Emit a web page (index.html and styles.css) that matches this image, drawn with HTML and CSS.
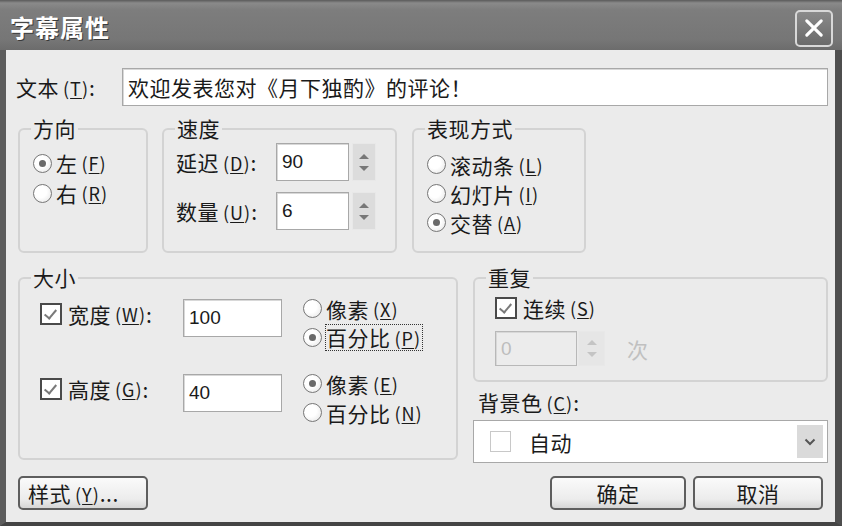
FILE: index.html
```html
<!DOCTYPE html>
<html lang="zh-CN">
<head>
<meta charset="utf-8">
<title>字幕属性</title>
<link rel="stylesheet" href="styles.css">
</head>
<body>
<div class="window">
  <div class="titlebar">
    <span class="title">字幕属性</span>
    <span class="close"><svg viewBox="0 0 20 20" width="24" height="24"><path d="M4 4 L16 16 M16 4 L4 16" stroke="#fff" stroke-width="2.6" stroke-linecap="round"/></svg></span>
  </div>
  <div class="content">
    <div class="row-text">
      <span class="lbl-text">文本<span class="acc">(<u>T</u>)</span>:</span>
      <div class="input wide">欢迎发表您对《月下独酌》的评论！</div>
    </div>

    <div class="row-groups">
      <div class="group g-dir">
        <span class="legend">方向</span>
        <div class="radio-row"><span class="radio on"></span>左<span class="acc">(<u>F</u>)</span></div>
        <div class="radio-row"><span class="radio"></span>右<span class="acc">(<u>R</u>)</span></div>
      </div>
      <div class="group g-speed">
        <span class="legend">速度</span>
        <div class="spin-row">
          <span class="spin-lbl">延迟<span class="acc">(<u>D</u>)</span>:</span>
          <div class="input num">90</div>
          <span class="spinner"><i class="up"></i><i class="down"></i></span>
        </div>
        <div class="spin-row">
          <span class="spin-lbl">数量<span class="acc">(<u>U</u>)</span>:</span>
          <div class="input num">6</div>
          <span class="spinner"><i class="up"></i><i class="down"></i></span>
        </div>
      </div>
      <div class="group g-mode">
        <span class="legend">表现方式</span>
        <div class="radio-row"><span class="radio"></span>滚动条<span class="acc">(<u>L</u>)</span></div>
        <div class="radio-row"><span class="radio"></span>幻灯片<span class="acc">(<u>I</u>)</span></div>
        <div class="radio-row"><span class="radio on"></span>交替<span class="acc">(<u>A</u>)</span></div>
      </div>
    </div>

    <div class="row-main">
      <div class="group g-size">
        <span class="legend">大小</span>
        <div class="size-row">
          <span class="chk-lbl"><span class="check"></span>宽度<span class="acc">(<u>W</u>)</span>:</span>
          <div class="input size">100</div>
          <div class="radio-col">
            <div class="radio-row"><span class="radio"></span>像素<span class="acc">(<u>X</u>)</span></div>
            <div class="radio-row"><span class="radio on"></span><span class="focus">百分比<span class="acc">(<u>P</u>)</span></span></div>
          </div>
        </div>
        <div class="size-row second">
          <span class="chk-lbl"><span class="check"></span>高度<span class="acc">(<u>G</u>)</span>:</span>
          <div class="input size">40</div>
          <div class="radio-col">
            <div class="radio-row"><span class="radio on"></span>像素<span class="acc">(<u>E</u>)</span></div>
            <div class="radio-row"><span class="radio"></span>百分比<span class="acc">(<u>N</u>)</span></div>
          </div>
        </div>
      </div>
      <div class="right-col">
        <div class="group g-repeat">
          <span class="legend">重复</span>
          <div class="chk-row"><span class="check"></span>连续<span class="acc">(<u>S</u>)</span></div>
          <div class="repeat-row">
            <div class="input num disabled">0</div>
            <span class="spinner disabled"><i class="up"></i><i class="down"></i></span>
            <span class="times">次</span>
          </div>
        </div>
        <div class="bg-lbl">背景色<span class="acc">(<u>C</u>)</span>:</div>
        <div class="select">
          <span class="swatch"></span>
          <span class="sel-text">自动</span>
          <span class="drop"><svg viewBox="0 0 12 8" width="12" height="8"><path d="M1.5 1.5 L6 6 L10.5 1.5" fill="none" stroke="#555" stroke-width="2"/></svg></span>
        </div>
      </div>
    </div>

    <div class="row-buttons">
      <button class="btn btn-style">样式<span class="acc">(<u>Y</u>)</span>...</button>
      <div class="btn-right">
        <button class="btn btn-ok">确定</button>
        <button class="btn btn-cancel">取消</button>
      </div>
    </div>
  </div>
</div>
</body>
</html>
```

FILE: styles.css
```css
* { box-sizing: border-box; }
html, body { margin: 0; padding: 0; }
body {
  width: 842px;
  height: 526px;
  overflow: hidden;
  background: #4a4a4a;
  font-family: "Noto Sans CJK SC", "Noto Sans", sans-serif;
  color: #1a1a1a;
}
.window {
  width: 842px;
  height: 526px;
  display: flex;
  flex-direction: column;
  background: #575757;
  border-left: 6px solid #5c5c5c;
  border-right: 7px solid #4e4e4e;
  border-bottom: 4px solid #444;
}
.titlebar {
  height: 50px;
  margin-left: -6px;
  margin-right: -7px;
  padding: 0 9px 0 10px;
  display: flex;
  align-items: center;
  justify-content: space-between;
  background: linear-gradient(#5a5a5a 0, #8a8a8a 3px, #7d7d7d 10px, #767676 40px, #6c6c6c 50px);
}
.title {
  color: #fff;
  font-size: 24px;
  font-weight: bold;
  letter-spacing: 1px;
  text-shadow: 1px 1px 0 #3a3a3a;
  margin-top: 2px;
}
.close {
  width: 38px;
  height: 37px;
  margin-top: 6px;
  border: 2px solid #d8d8d8;
  border-radius: 5px;
  background: linear-gradient(#8a8a8a, #6a6a6a);
  display: flex;
  align-items: center;
  justify-content: center;
}
.content {
  flex: 1;
  background: #ebebeb;
  font-size: 21px;
  line-height: 24px;
  letter-spacing: 0.5px;
}
.acc {
  font-size: 18px;
  margin-left: 4px;
  letter-spacing: 1px;
}
.acc u { text-decoration-thickness: 1px; text-underline-offset: 2px; }

.row-text {
  display: flex;
  align-items: center;
  margin-top: 18px;
  padding-left: 10px;
  height: 38px;
}
.lbl-text { width: 106px; }
.input {
  background: #fff;
  border: 1px solid #a8a8a8;
  box-shadow: inset 1px 1px 0 #d8d8d8;
  font-family: "Liberation Sans", Arial, sans-serif;
  font-size: 19px;
  letter-spacing: 0;
  display: flex;
  align-items: center;
  padding-left: 5px;
}
.input.wide {
  width: 706px;
  height: 38px;
  font-family: "Noto Sans CJK SC", sans-serif;
  font-size: 21px;
  letter-spacing: 0.5px;
}

.group {
  position: relative;
  border: 2px solid #d3d3d3;
  border-radius: 6px;
}
.legend {
  position: absolute;
  top: -14px;
  left: 11px;
  padding: 0 2px;
  background: #ebebeb;
  line-height: 24px;
}

.row-groups {
  display: flex;
  margin-top: 22px;
  padding-left: 12px;
}
.row-groups .group { height: 125px; }
.g-dir { width: 130px; padding: 18px 0 0 13px; }
.g-speed { width: 235px; margin-left: 14px; padding: 13px 0 0 12px; }
.g-mode { width: 174px; margin-left: 15px; padding: 20px 0 0 13px; }

.radio-row {
  display: flex;
  align-items: center;
  height: 30px;
}
.g-mode .radio-row { height: 29px; }
.radio {
  width: 19px;
  height: 19px;
  border: 1px solid #777;
  border-radius: 50%;
  background: radial-gradient(circle at 40% 40%, #fff 40%, #e2e2e2 100%);
  margin-right: 4px;
  display: flex;
  align-items: center;
  justify-content: center;
  flex: none;
}
.radio.on::after {
  content: "";
  width: 7px;
  height: 7px;
  border-radius: 50%;
  background: #6a6a6a;
}

.spin-row {
  display: flex;
  align-items: center;
  height: 38px;
  margin-bottom: 11px;
}
.spin-lbl { width: 100px; }
.input.num { width: 73px; height: 38px; }
.spinner {
  width: 24px;
  height: 38px;
  margin-left: 3px;
  background: #dcdcdc;
  border: 1px solid #e8e8e8;
  display: flex;
  flex-direction: column;
  align-items: center;
  justify-content: center;
  gap: 7px;
}
.spinner i {
  display: block;
  width: 0;
  height: 0;
  border-left: 5px solid transparent;
  border-right: 5px solid transparent;
}
.spinner .up { border-bottom: 5px solid #777; }
.spinner .down { border-top: 5px solid #777; }
.spinner.disabled { background: #e6e6e6; }
.spinner.disabled .up { border-bottom-color: #c4c4c4; }
.spinner.disabled .down { border-top-color: #c4c4c4; }

.row-main {
  display: flex;
  align-items: flex-start;
  margin-top: 24px;
  padding-left: 12px;
}
.g-size {
  width: 440px;
  height: 183px;
  padding: 15px 0 0 20px;
}
.size-row {
  display: flex;
  align-items: flex-start;
}
.size-row.second { margin-top: 17px; }
.chk-lbl {
  width: 143px;
  display: flex;
  align-items: center;
  height: 24px;
  margin-top: 8px;
}
.check {
  width: 22px;
  height: 22px;
  border: 2px solid #4a4a4a;
  background: #fff;
  margin-right: 6px;
  position: relative;
  flex: none;
}
.check::after {
  content: "";
  position: absolute;
  left: 5px;
  top: 2px;
  width: 5px;
  height: 10px;
  border-right: 2px solid #7a7a7a;
  border-bottom: 2px solid #7a7a7a;
  transform: rotate(40deg);
}
.input.size { width: 99px; height: 38px; margin-top: 5px; }
.radio-col { margin-left: 21px; }
.radio-col .radio-row { height: 29px; }
.focus {
  outline: 1px dotted #333;
  outline-offset: 0;
  padding-right: 1px;
}

.right-col {
  margin-left: 15px;
  width: 355px;
}
.g-repeat {
  height: 105px;
  padding: 17px 0 0 20px;
}
.chk-row {
  display: flex;
  align-items: center;
  height: 24px;
}
.repeat-row {
  display: flex;
  align-items: center;
  margin-top: 11px;
}
.input.disabled {
  width: 82px;
  height: 35px;
  background: #ececec;
  color: #bdbdbd;
  border-color: #b8b8b8;
}
.spinner.disabled { height: 35px; width: 27px; margin-left: 1px; }
.times { margin-left: 22px; color: #c0c0c0; }
.bg-lbl {
  margin-top: 8px;
  padding-left: 5px;
  height: 24px;
}
.select {
  margin-top: 6px;
  height: 43px;
  background: #fff;
  border: 1px solid #a8a8a8;
  display: flex;
  align-items: center;
  padding-left: 16px;
  padding-right: 4px;
}
.swatch {
  width: 21px;
  height: 21px;
  border: 1px solid #c8c8c8;
}
.sel-text { margin-left: 18px; flex: 1; }
.drop {
  width: 26px;
  height: 33px;
  background: #dadada;
  display: flex;
  align-items: center;
  justify-content: center;
}

.row-buttons {
  display: flex;
  justify-content: space-between;
  margin-top: 13px;
  padding-left: 12px;
  padding-right: 12px;
}
.btn-right { display: flex; gap: 7px; }
.btn {
  height: 34px;
  font-family: inherit;
  font-size: 21px;
  letter-spacing: 0.5px;
  color: #1a1a1a;
  border: 2px solid #5e5e5e;
  border-radius: 5px;
  background: linear-gradient(#fafafa, #ececec 70%, #d6d6d6);
  padding: 0;
  line-height: 24px;
}
.btn-style { width: 130px; text-align: left; padding-left: 8px; }
.btn-ok { width: 136px; }
.btn-cancel { width: 130px; }
```
